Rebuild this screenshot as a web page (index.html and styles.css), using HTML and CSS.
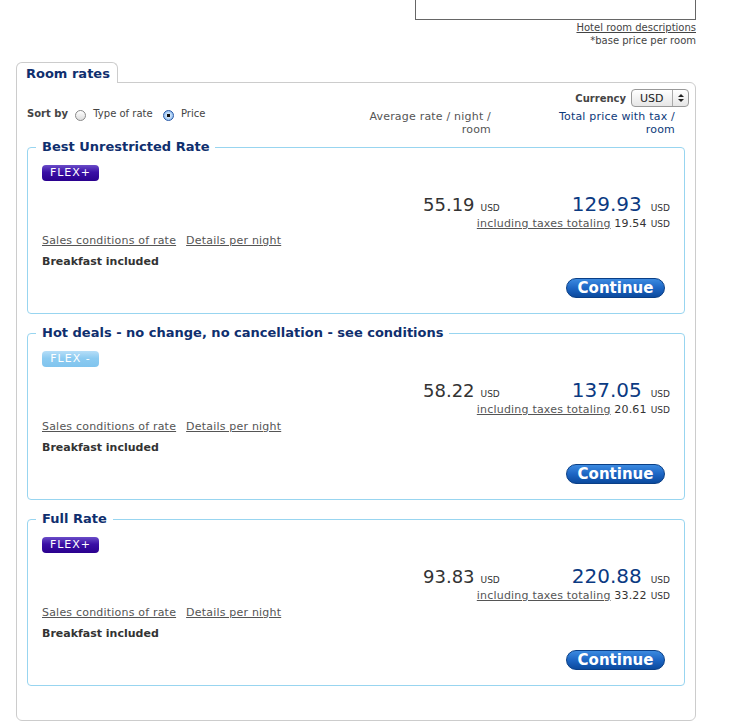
FILE: index.html
```html
<!DOCTYPE html>
<html lang="en">
<head>
    <meta charset="UTF-8">
    <title>Room rates</title>
    <link rel="stylesheet" href="styles.css">
</head>
<body>
    <div class="page">
        <div class="room-top">
            <div class="room-photo"></div>
            <a href="#" class="room-link">Hotel room descriptions</a>
            <div class="room-note">*base price per room</div>
        </div>

        <div class="tab">Room rates</div>
        <div class="panel">
            <div class="currency-row">
                <span class="label">Currency</span>
                <span class="select">USD<span class="arrows"></span></span>
            </div>
            <div class="sort-row">
                <div class="sort">
                    <span class="label">Sort by</span>
                    <span class="radio"></span> Type of rate
                    <span class="radio checked"></span> Price
                </div>
                <div class="col-head avg-head">Average rate / night / room</div>
                <div class="col-head total-head">Total price with tax / room</div>
            </div>

            <fieldset class="rate">
                <legend>Best Unrestricted Rate</legend>
                <span class="badge flex-plus">FLEX+</span>
                <div class="prices">
                    <span class="avg">55.19<small>USD</small></span>
                    <span class="total">129.93<small>USD</small></span>
                </div>
                <div class="taxes"><a href="#">including taxes totaling</a> 19.54<small>USD</small></div>
                <div class="links"><a href="#">Sales conditions of rate</a><a href="#">Details per night</a></div>
                <div class="breakfast">Breakfast included</div>
                <div class="actions"><button class="continue">Continue</button></div>
            </fieldset>

            <fieldset class="rate">
                <legend>Hot deals - no change, no cancellation - see conditions</legend>
                <span class="badge flex-minus">FLEX -</span>
                <div class="prices">
                    <span class="avg">58.22<small>USD</small></span>
                    <span class="total">137.05<small>USD</small></span>
                </div>
                <div class="taxes"><a href="#">including taxes totaling</a> 20.61<small>USD</small></div>
                <div class="links"><a href="#">Sales conditions of rate</a><a href="#">Details per night</a></div>
                <div class="breakfast">Breakfast included</div>
                <div class="actions"><button class="continue">Continue</button></div>
            </fieldset>

            <fieldset class="rate">
                <legend>Full Rate</legend>
                <span class="badge flex-plus">FLEX+</span>
                <div class="prices">
                    <span class="avg">93.83<small>USD</small></span>
                    <span class="total">220.88<small>USD</small></span>
                </div>
                <div class="taxes"><a href="#">including taxes totaling</a> 33.22<small>USD</small></div>
                <div class="links"><a href="#">Sales conditions of rate</a><a href="#">Details per night</a></div>
                <div class="breakfast">Breakfast included</div>
                <div class="actions"><button class="continue">Continue</button></div>
            </fieldset>
        </div>
    </div>
</body>
</html>
```

FILE: styles.css
```css
body {
    margin: 0;
    font-family: "DejaVu Sans", Verdana, sans-serif;
    font-size: 11px;
    color: #333;
    background: #fff;
}
a {
    color: #555;
}
.page {
    width: 680px;
    margin-left: 16px;
}
.room-top {
    display: flex;
    flex-direction: column;
    align-items: flex-end;
    font-size: 10px;
    line-height: 13px;
    color: #444;
}
.room-photo {
    width: 279px;
    height: 19px;
    border: 1px solid #666;
    border-top: none;
}
.room-link {
    color: #444;
    margin-top: 1px;
}

.tab {
    width: 91px;
    height: 20px;
    margin-top: 15px;
    padding-left: 9px;
    border: 1px solid #ccc;
    border-bottom: none;
    border-radius: 6px 6px 0 0;
    background: #fff;
    color: #0f2f6e;
    font-size: 13px;
    font-weight: bold;
    line-height: 22px;
    position: relative;
    z-index: 1;
    margin-bottom: -1px;
}
.panel {
    border: 1px solid #ccc;
    border-radius: 0 6px 6px 6px;
    padding: 6px 10px 23px 10px;
}
.label {
    font-size: 10px;
    font-weight: bold;
    color: #444;
}
.currency-row {
    display: flex;
    justify-content: flex-end;
    align-items: center;
    gap: 5px;
    margin-right: -4px;
    height: 18px;
}
.select {
    display: flex;
    align-items: center;
    width: 48px;
    height: 16px;
    padding-left: 8px;
    border: 1px solid #999;
    border-radius: 4px;
    background: linear-gradient(#fff, #e6e6e6);
    font-size: 11px;
    color: #222;
    position: relative;
}
.arrows {
    position: absolute;
    right: 0;
    top: 0;
    width: 15px;
    height: 16px;
    border-left: 1px solid #aaa;
}
.arrows::before, .arrows::after {
    content: "";
    position: absolute;
    left: 5px;
    border-left: 3px solid transparent;
    border-right: 3px solid transparent;
}
.arrows::before {
    top: 4px;
    border-bottom: 3px solid #222;
}
.arrows::after {
    top: 9px;
    border-top: 3px solid #222;
}

.sort-row {
    display: flex;
    align-items: flex-start;
}
.sort {
    flex: 1;
    font-size: 10px;
    line-height: 13px;
    color: #444;
}
.radio {
    display: inline-block;
    width: 9px;
    height: 9px;
    margin: 0 4px 0 4px;
    border: 1px solid #888;
    border-radius: 50%;
    background: linear-gradient(#fff, #ddd);
    vertical-align: -4px;
}
.radio.checked {
    border-color: #2a5aa8;
    background: radial-gradient(#111 0 1.5px, #cfe4fa 2px, #6aa6e8);
    margin-left: 7px;
}
.col-head {
    margin-top: 3px;
    line-height: 13px;
    text-align: right;
    letter-spacing: 0.2px;
}
.avg-head {
    width: 134px;
    color: #555;
    margin-right: 62px;
}
.total-head {
    width: 122px;
    color: #0d3a7a;
    margin-right: 10px;
}

.rate {
    margin: 3px 0 11px;
    padding: 0 14px 15px 14px;
    border: 1px solid #98d5f0;
    border-radius: 4px;
}
.rate legend {
    margin-left: -6px;
    padding: 0 6px;
    font-size: 13px;
    font-weight: bold;
    color: #0f2f6e;
    line-height: 16px;
}
.badge {
    display: inline-block;
    width: 57px;
    height: 16px;
    margin-top: 10px;
    border-radius: 4px;
    color: #fff;
    font-size: 11px;
    line-height: 16px;
    text-align: center;
    letter-spacing: 1px;
}
.flex-plus {
    background: linear-gradient(#6a4cc8, #3a0fa6 45%, #2a008e);
}
.flex-minus {
    background: linear-gradient(#b6def8, #8ccbf1 45%, #80c4ee);
}
.prices {
    display: flex;
    justify-content: flex-end;
    align-items: baseline;
    margin-top: 13px;
    margin-bottom: -2px;
    line-height: 21px;
}
.prices small, .taxes small {
    font-size: 9px;
    margin-left: 6px;
}
.avg {
    font-size: 18px;
    color: #333;
    margin-right: 72px;
}
.total {
    font-size: 20px;
    color: #0b3a82;
}
.total small {
    color: #333;
    margin-left: 9px;
}
.taxes {
    text-align: right;
    line-height: 13px;
    letter-spacing: 0.2px;
}
.taxes small {
    margin-left: 4px;
    letter-spacing: 0;
}
.links {
    display: flex;
    gap: 10px;
    margin-top: 3px;
    line-height: 13px;
    letter-spacing: 0.2px;
}
.breakfast {
    margin-top: 8px;
    font-weight: bold;
    line-height: 13px;
}
.actions {
    display: flex;
    justify-content: flex-end;
    margin-top: 10px;
    padding-right: 5px;
}
.continue {
    width: 99px;
    height: 20px;
    padding: 0;
    border: 1px solid #0a3f86;
    border-radius: 10px;
    background: linear-gradient(#3c8ae0, #1d66c4 50%, #0b4a9e);
    color: #fff;
    font-family: "DejaVu Sans", Verdana, sans-serif;
    font-size: 15px;
    font-weight: bold;
    line-height: 18px;
    cursor: pointer;
}
```
